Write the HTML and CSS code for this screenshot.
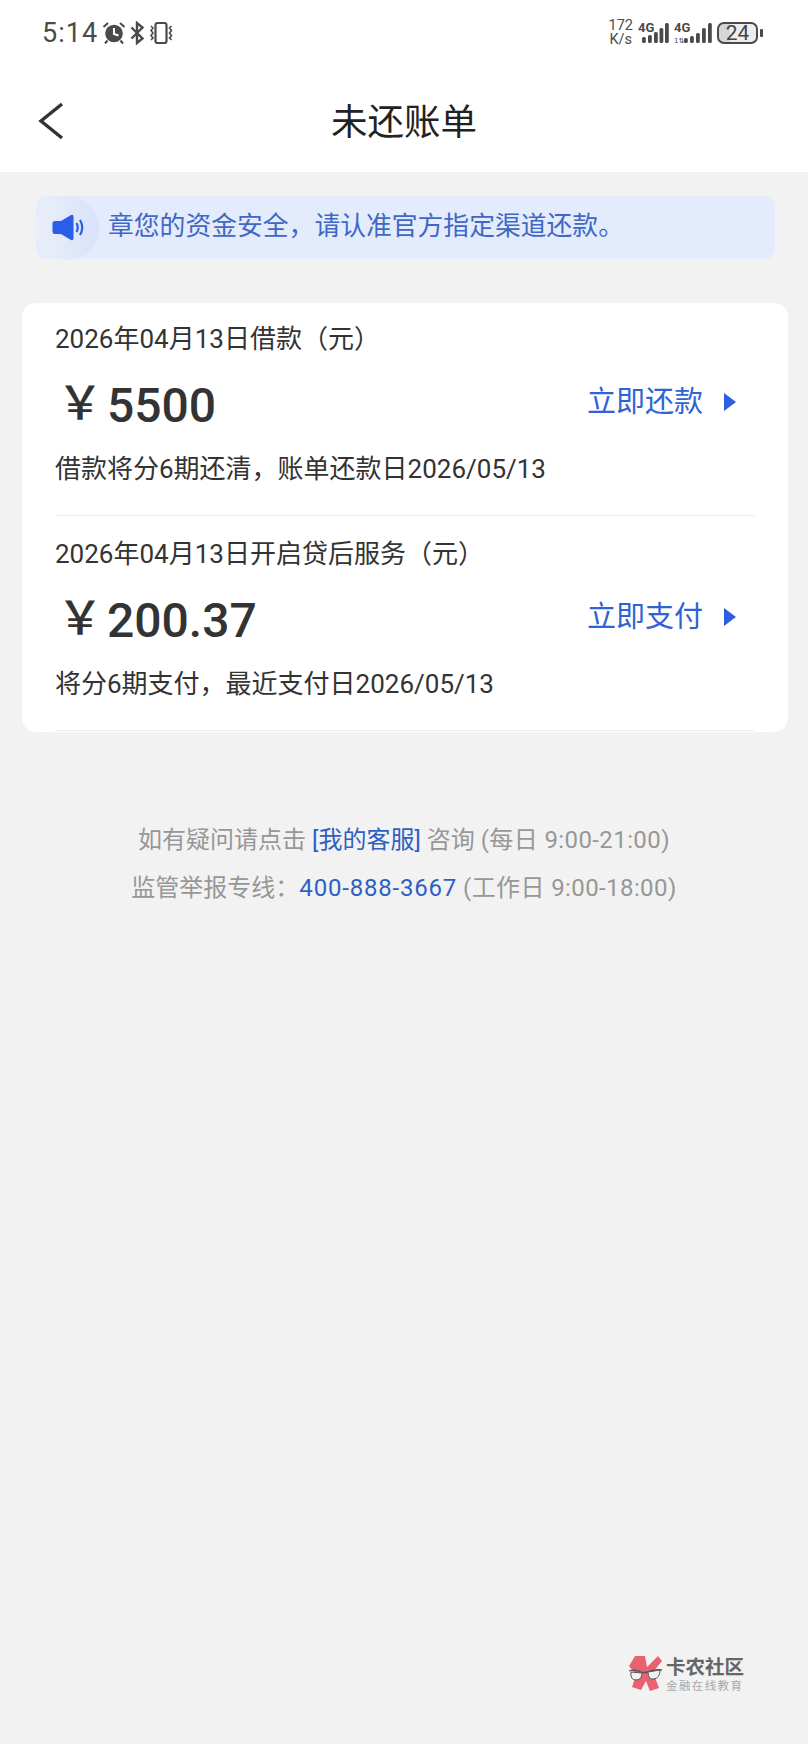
FILE: index.html
```html
<!DOCTYPE html>
<html lang="zh">
<head>
<meta charset="utf-8">
<title>未还账单</title>
<link rel="stylesheet" href="styles.css">
</head>
<body>
<header class="top">
  <div class="status">
    <div class="status-left">
      <span class="time">5:14</span>
      <svg class="ic-alarm" width="24" height="24" viewBox="0 0 24 24"><circle cx="12" cy="12.500" r="8.800" fill="#4a4a4a"/><path d="M12 7v6l4.500 1.500" fill="none" stroke="#fff" stroke-width="2"/><path d="M1.500 6 6 2M22.500 6 18 2M5.500 19.500l-2.500 3M18.500 19.500l2.500 3" stroke="#4a4a4a" stroke-width="2" fill="none"/></svg>
      <svg class="ic-bt" width="14" height="24" viewBox="0 0 14 24"><path d="M1.500 6.500l11 11-5.500 4.500V2l5.500 4.500-11 11" fill="none" stroke="#4a4a4a" stroke-width="2.400"/></svg>
      <svg class="ic-vib" width="26" height="24" viewBox="0 0 26 24"><rect x="7.500" y="2" width="11" height="20" rx="2" fill="none" stroke="#4a4a4a" stroke-width="2.200"/><path d="M3 5l2 2-2 2.500 2 2.500-2 2.500 2 2.500-2 2M23.500 5l-2 2 2 2.500-2 2.500 2 2.500-2 2.500 2 2" fill="none" stroke="#4a4a4a" stroke-width="1.600"/></svg>
    </div>
    <div class="status-right">
      <span class="speed"><span>172</span><span>K/s</span></span>
      <svg class="ic-sig" width="31" height="25" viewBox="0 -3 31 25"><text x="0" y="10" class="sig-t">4G</text><rect x="4" y="15" width="3.800" height="6" rx="1.500"/><rect x="10" y="13" width="3.800" height="8" rx="1.500"/><rect x="16" y="10" width="3.800" height="11" rx="1.500"/><rect x="21.500" y="6" width="3.800" height="15" rx="1.500"/><rect x="27" y="1" width="3.800" height="20" rx="1.500"/></svg>
      <svg class="ic-sig" width="38" height="25" viewBox="0 -3 38 25"><text x="0" y="10" class="sig-t">4G</text><text x="0" y="21" class="sig-s">1⇅</text><rect x="10" y="16" width="3.800" height="5" rx="1.500"/><rect x="16" y="14" width="3.800" height="7" rx="1.500"/><rect x="22" y="11" width="3.800" height="10" rx="1.500"/><rect x="28" y="6" width="3.800" height="15" rx="1.500"/><rect x="34" y="1" width="3.800" height="20" rx="1.500"/></svg>
      <div class="battery"><span class="batt-num">24</span></div>
      <span class="batt-tip"></span>
    </div>
  </div>
  <nav class="nav">
    <svg class="back" width="28" height="38" viewBox="0 0 28 38"><path d="M25 2 4 19l21 17" fill="none" stroke="#333" stroke-width="3.400"/></svg>
    <h1 class="title">未还账单</h1>
  </nav>
</header>

<main class="main">
  <div class="notice">
    <span class="notice-icon">
      <svg width="33" height="27" viewBox="0 0 33 27"><path d="M3 7h6l10-6q2.500-1 2.500 2v21q0 3-2.500 2L9 20H3q-2.500 0-2.500-2.500v-8Q.5 7 3 7z" fill="#2b5ee8"/><path d="M24.500 9q2.500 4.500 0 9M28 6q4.500 7.500 0 15" fill="none" stroke="#2b5ee8" stroke-width="2.200"/></svg>
    </span>
    <span class="notice-text">章您的资金安全，请认准官方指定渠道还款。</span>
  </div>

  <section class="card">
    <div class="bill">
      <p class="bill-title">2026年04月13日借款（元）</p>
      <div class="bill-main">
        <span class="amount"><span class="yen">￥</span>5500</span>
        <a class="action">立即还款<span class="tri"></span></a>
      </div>
      <p class="bill-desc">借款将分6期还清，账单还款日2026/05/13</p>
    </div>
    <div class="bill">
      <p class="bill-title">2026年04月13日开启贷后服务（元）</p>
      <div class="bill-main">
        <span class="amount"><span class="yen">￥</span>200.37</span>
        <a class="action">立即支付<span class="tri"></span></a>
      </div>
      <p class="bill-desc">将分6期支付，最近支付日2026/05/13</p>
    </div>
  </section>

  <div class="help">
    <p>如有疑问请点击 <a class="link">[我的客服]</a> 咨询 <span class="hours">(每日 9:00-21:00)</span></p>
    <p>监管举报专线：<a class="link phone">400-888-3667</a> <span class="hours">(工作日 9:00-18:00)</span></p>
  </div>

  <div class="brand">
    <svg width="36" height="37" viewBox="0 0 36 37"><path d="M7 1h10l2 11L30 1l4 5-9 11 6 16-9 3-4-10-5 9-9-3 4-12-7-9z" fill="#e8636f"/><path d="M1 16q6-2 12 1 3 1 7 0 6-3 14-2" fill="none" stroke="#555" stroke-width="1.300"/><path d="M3 17q-1 8 5 8t6-7zM20 17q0 8 6 7t6-9z" fill="#f4f0f0" stroke="#555" stroke-width="1"/></svg>
    <div class="brand-text">
      <span class="brand-name">卡农社区</span>
      <span class="brand-sub">金融在线教育</span>
    </div>
  </div>
</main>
</body>
</html>
```
FILE: styles.css
```css
* { box-sizing: border-box; }
html, body { margin: 0; padding: 0; }
body {
  width: 808px;
  height: 1744px;
  background: #f2f2f2;
  font-family: Roboto, "Noto Sans CJK SC", "Noto Sans", sans-serif;
  color: #333;
  display: flex;
  flex-direction: column;
  overflow: hidden;
}
p, h1 { margin: 0; font-weight: 400; }

.top { background: #fff; height: 172px; flex: none; }
.status {
  height: 68px;
  padding: 0 45px 2px 42px;
  display: flex;
  justify-content: space-between;
  align-items: center;
}
.status-left, .status-right { display: flex; align-items: center; }
.status-left { gap: 4px; }
.time { font-size: 27px; letter-spacing: 1px; color: #4a4a4a; }
.status-right { gap: 5px; }
.speed {
  display: flex; flex-direction: column; align-items: center;
  font-size: 14.500px; line-height: 14px; color: #4a4a4a;
}
.ic-sig { margin-top: -3px; }
.ic-sig rect { fill: #4a4a4a; }
.sig-t { font-size: 13px; font-weight: 700; fill: #4a4a4a; }
.sig-s { font-family: "DejaVu Sans", sans-serif; font-size: 7px; fill: #4a4a4a; }
.battery {
  width: 41px; height: 22px;
  border: 2px solid #4a4a4a; border-radius: 7px;
  background: linear-gradient(90deg, #d6d6d6 0 30%, #ededed 30%);
  display: flex; align-items: center; justify-content: center;
}
.batt-num { font-size: 21px; line-height: 1; color: #444; }
.batt-tip { width: 3px; height: 8px; background: #4a4a4a; border-radius: 1px; margin-left: -3px; }

.nav { height: 104px; display: flex; align-items: center; justify-content: center; position: relative; }
.back { position: absolute; left: 37px; top: 34px; }
.title { font-size: 36.500px; line-height: 50px; color: #222; margin-top: 5px; }

.main { flex: 1; display: flex; flex-direction: column; padding-top: 24px; position: relative; }
.notice {
  margin: 0 33px 0 36px;
  height: 63px;
  background: #e3ebfd;
  border-radius: 10px;
  display: flex;
  align-items: center;
}
.notice-icon {
  width: 64px; height: 64px; border-radius: 50%; margin-left: -1px;
  background: linear-gradient(90deg, #ebeff8, #d9e2fb);
  display: flex; align-items: center; justify-content: center; flex: none;
}
.notice-icon svg { margin-left: 2px; }
.notice-text { margin-left: 9px; margin-bottom: 8px; font-size: 25.800px; color: #3f68c4; white-space: nowrap; }

.card {
  margin: 44px 20px 0 22px;
  background: #fff;
  border-radius: 14px;
  padding: 0 33px;
  height: 429px;
}
.bill { height: 213px; margin-bottom: 2px; border-bottom: 1px solid #eee; padding-top: 18px; }
.bill:last-child { margin-bottom: 0; }
.bill-title { font-size: 26px; line-height: 36px; color: #333; }
.bill-main { display: flex; justify-content: space-between; align-items: center; height: 80px; margin-top: 8px; }
.amount { font-weight: 500; font-size: 48px; color: #333; display: flex; align-items: center; }
.yen { font-family: "Noto Sans CJK SC", sans-serif; font-weight: 500; font-size: 46px; margin: 0 4px 12px 2px; }
.action { font-size: 29px; color: #2f62d4; display: flex; align-items: center; padding-right: 19px; margin-bottom: 12px; }
.tri {
  width: 0; height: 0; margin: 6px 0 0 21px;
  border-left: 12px solid #2b5ee0;
  border-top: 9px solid transparent;
  border-bottom: 9px solid transparent;
}
.bill-desc { font-size: 26px; line-height: 36px; color: #333; margin-top: 6px; }

.help { margin-top: 84px; text-align: center; font-size: 24px; line-height: 48px; color: #979797; }
.link { color: #2f5fc4; }
.phone { letter-spacing: 0.800px; }
.hours { letter-spacing: 0.400px; }

.brand {
  position: absolute; left: 628px; top: 1483px;
  display: flex; align-items: flex-start;
}
.brand-text { display: flex; flex-direction: column; margin: 2px 0 0 2px; }
.brand-name { font-size: 19.500px; line-height: 22px; font-weight: 700; color: #666; }
.brand-sub { font-size: 11.500px; line-height: 12px; margin-top: 1px; color: #a8a8a8; letter-spacing: 1.400px; }
```
